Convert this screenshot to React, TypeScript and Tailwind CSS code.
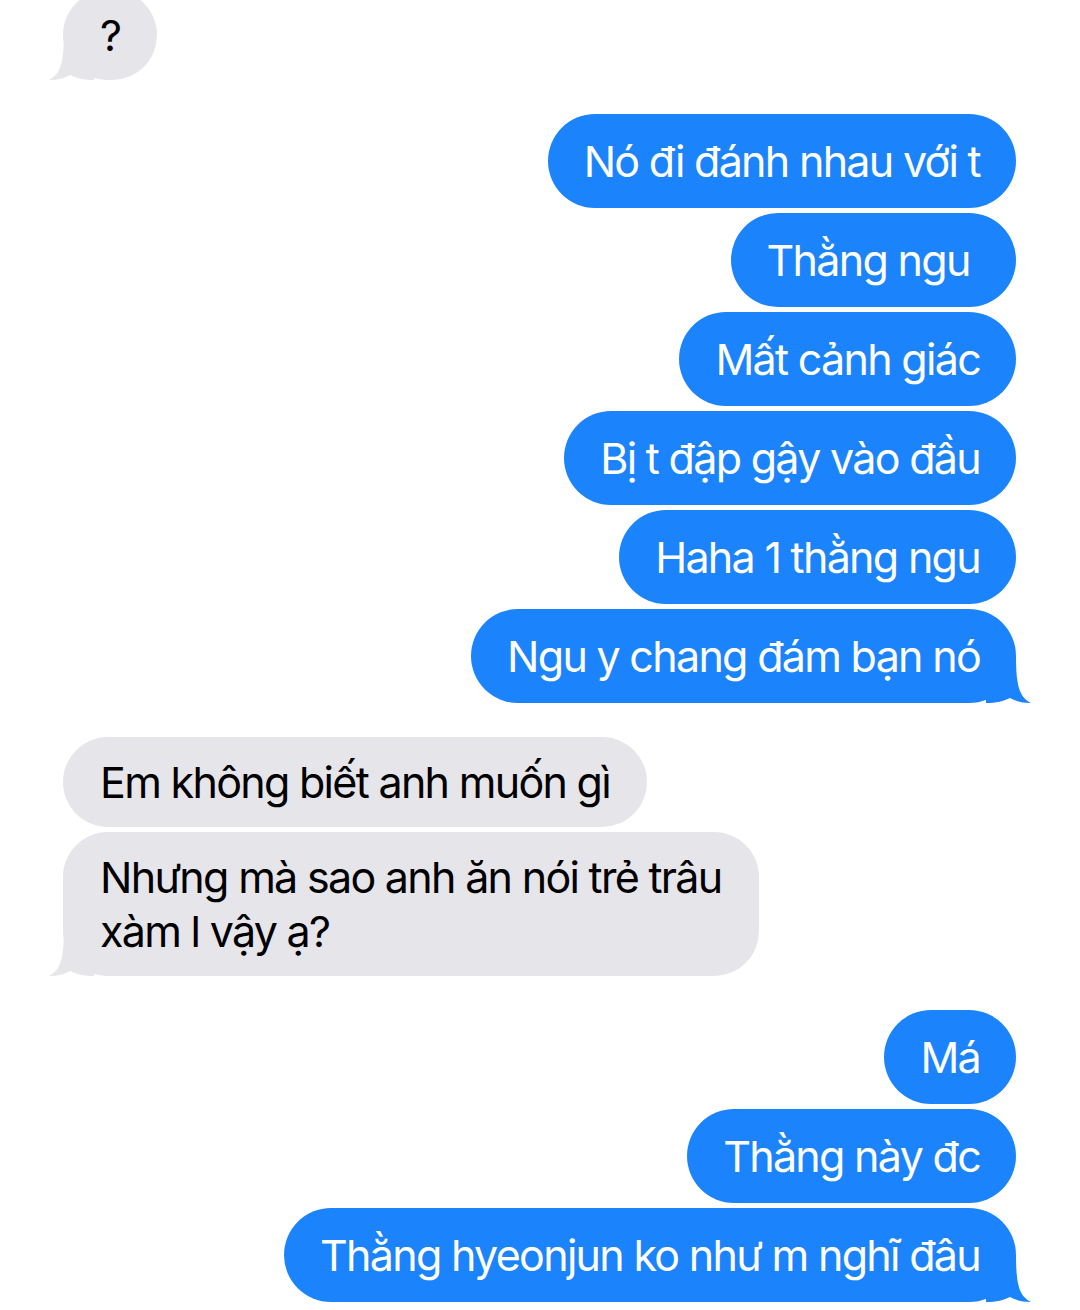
import React from "react";

type Msg = { text: React.ReactNode; tail?: boolean };

const BLUE = "#1b84fc";

function TailRight() {
  return (
    <svg
      className="absolute -right-[15px] bottom-0"
      width="45"
      height="48"
      viewBox="0 0 45 48"
    >
      <path
        d="M30 0 C30 30 33 42 45 48 C36 48 29 46 24 43 C18 46 10 48 0 48 L0 0 Z"
        fill={BLUE}
      />
    </svg>
  );
}

function TailLeft() {
  return (
    <svg
      className="absolute -left-[14px] bottom-0"
      width="45"
      height="48"
      viewBox="0 0 45 48"
    >
      <path
        d="M15 0 C15 30 12 42 0 48 C9 48 16 46 21 43 C27 46 35 48 45 48 L45 0 Z"
        fill="#e5e5ea"
      />
    </svg>
  );
}

function Sent({ text, tail }: Msg) {
  return (
    <div className="relative w-fit self-end rounded-[47px] bg-[#1b84fc] px-[36px] py-[20px] text-white">
      {tail && <TailRight />}
      <span className="relative">{text}</span>
    </div>
  );
}

function Received({ text, tail }: Msg) {
  return (
    <div className="relative w-fit self-start rounded-[45px] bg-[#e5e5ea] px-[37px] py-[18px] text-black">
      {tail && <TailLeft />}
      <span className="relative">{text}</span>
    </div>
  );
}

export default function App() {
  return (
    <div
      className="flex h-[1310px] w-[1080px] flex-col overflow-hidden bg-white pl-[63px] pr-[64px] text-[43px] leading-[54px] tracking-[-1.7px]"
      style={{ fontFamily: "Inter, 'Noto Sans', sans-serif" }}
    >
      <div className="-mt-[10px] flex flex-col">
        <Received text="?" tail />
      </div>

      <div className="mt-[34px] flex flex-col gap-[5px]">
        <Sent text="Nó đi đánh nhau với t" />
        <Sent text={"Thằng ngu\u00a0"} />
        <Sent text="Mất cảnh giác" />
        <Sent text="Bị t đập gậy vào đầu" />
        <Sent text="Haha 1 thằng ngu" />
        <Sent text="Ngu y chang đám bạn nó" tail />
      </div>

      <div className="mt-[34px] flex flex-col gap-[5px]">
        <Received text="Em không biết anh muốn gì" />
        <Received
          text={
            <>
              Nhưng mà sao anh ăn nói trẻ trâu
              <br />
              xàm l vậy ạ?
            </>
          }
          tail
        />
      </div>

      <div className="mt-[34px] flex flex-col gap-[5px]">
        <Sent text="Má" />
        <Sent text="Thằng này đc" />
        <Sent text="Thằng hyeonjun ko như m nghĩ đâu" tail />
      </div>
    </div>
  );
}
